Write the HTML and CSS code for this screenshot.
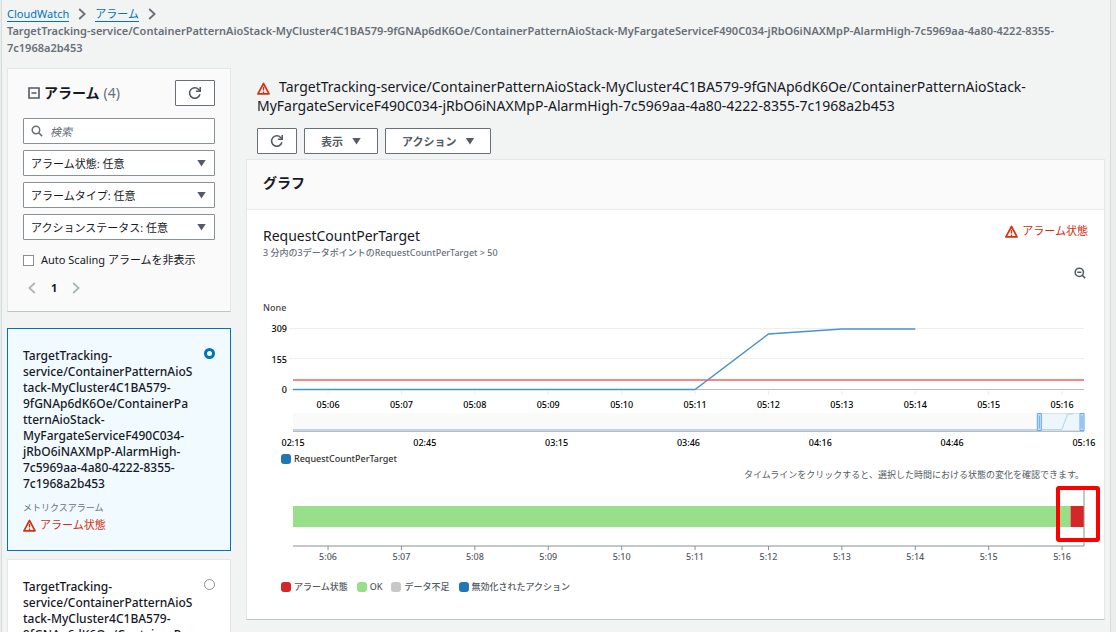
FILE: index.html
```html
<!DOCTYPE html>
<html lang="ja">
<head>
  <meta charset="UTF-8">
  <meta name="viewport" content="width=device-width, initial-scale=1.0">
  <title>CloudWatch アラーム</title>
  <link rel="stylesheet" href="styles.css">
</head>
<body>
  <!-- 共通アイコン -->
  <svg class="sprite" aria-hidden="true">
    <symbol id="icon-alarm" viewBox="0 0 14 14">
      <path d="M7 1.6 L13 12.8 H1 Z" fill="none" stroke="currentColor" stroke-width="1.8" stroke-linejoin="round"/>
      <path d="M7 5 V9.2 M7 10.2 V11.8" fill="none" stroke="currentColor" stroke-width="1.5"/>
    </symbol>
    <symbol id="icon-refresh" viewBox="0 0 16 16">
      <path d="M13.6 9.4 A6 6 0 1 1 12.2 3.9 L13.6 5.4" fill="none" stroke="currentColor" stroke-width="1.8"/>
      <path d="M14 1 V6 H9" fill="none" stroke="currentColor" stroke-width="1.8"/>
    </symbol>
    <symbol id="icon-chevron" viewBox="0 0 8 12">
      <path d="M1.2 1 L6.6 6 L1.2 11" fill="none" stroke="currentColor" stroke-width="1.8"/>
    </symbol>
  </svg>

  <div class="page">
    <nav class="breadcrumb" aria-label="パンくずリスト">
      <a href="#">CloudWatch</a><svg class="sep"><use href="#icon-chevron"/></svg><a href="#">アラーム</a><svg class="sep"><use href="#icon-chevron"/></svg>
      <span class="current">TargetTracking-service/ContainerPatternAioStack-MyCluster4C1BA579-9fGNAp6dK6Oe/ContainerPatternAioStack-MyFargateServiceF490C034-jRbO6iNAXMpP-AlarmHigh-7c5969aa-4a80-4222-8355-7c1968a2b453</span>
    </nav>

    <div class="columns">
      <!-- 左側: アラーム一覧 -->
      <aside class="sidebar">
        <section class="panel filters">
          <div class="filters-head">
            <h2>
              <svg class="collapse" viewBox="0 0 12 12"><path d="M1 1 H11 V11 H1 Z M3.5 6 H8.5" fill="none" stroke="currentColor" stroke-width="1.6"/></svg>
              アラーム <span class="count">(4)</span>
            </h2>
            <button class="btn btn-icon" type="button" aria-label="更新"><svg><use href="#icon-refresh"/></svg></button>
          </div>
          <div class="fields">
            <label class="search">
              <svg viewBox="0 0 14 14"><circle cx="5.8" cy="5.8" r="4.4" fill="none" stroke="currentColor" stroke-width="1.7"/><path d="M9 9 L13 13" stroke="currentColor" stroke-width="1.9"/></svg>
              <input type="text" placeholder="検索" aria-label="検索">
            </label>
            <div class="select"><select aria-label="アラーム状態"><option>アラーム状態: 任意</option></select></div>
            <div class="select"><select aria-label="アラームタイプ"><option>アラームタイプ: 任意</option></select></div>
            <div class="select"><select aria-label="アクションステータス"><option>アクションステータス: 任意</option></select></div>
          </div>
          <label class="check"><input type="checkbox"> Auto Scaling アラームを非表示</label>
          <div class="pager">
            <button type="button" aria-label="前へ"><svg class="prev"><use href="#icon-chevron"/></svg></button>
            <b>1</b>
            <button type="button" aria-label="次へ"><svg><use href="#icon-chevron"/></svg></button>
          </div>
        </section>

        <label class="panel card selected">
          <span class="card-top">
            <span class="card-name">TargetTracking-service/ContainerPatternAioStack-MyCluster4C1BA579-9fGNAp6dK6Oe/ContainerPa<wbr>tternAioStack-MyFargateServiceF490C034-jRbO6iNAXMpP-AlarmHigh-7c5969aa-4a80-4222-8355-7c1968a2b453</span>
            <input type="radio" name="alarm" checked>
          </span>
          <span class="card-type">メトリクスアラーム</span>
          <span class="state"><svg><use href="#icon-alarm"/></svg>アラーム状態</span>
        </label>

        <label class="panel card">
          <span class="card-top">
            <span class="card-name">TargetTracking-service/ContainerPatternAioStack-MyCluster4C1BA579-9fGNAp6dK6Oe/ContainerPa<wbr>tternAioStack-</span>
            <input type="radio" name="alarm">
          </span>
        </label>
      </aside>

      <!-- 右側: アラームの詳細 -->
      <main class="detail">
        <h1><svg><use href="#icon-alarm"/></svg>TargetTracking-service/ContainerPatternAioStack-MyCluster4C1BA579-9fGNAp6dK6Oe/ContainerPatternAioStack-MyFargateServiceF490C034-jRbO6iNAXMpP-AlarmHigh-7c5969aa-4a80-4222-8355-7c1968a2b453</h1>
        <div class="actions">
          <button class="btn btn-icon" type="button" aria-label="更新"><svg><use href="#icon-refresh"/></svg></button>
          <button class="btn btn-menu" type="button">表示</button>
          <button class="btn btn-menu" type="button">アクション</button>
        </div>

        <section class="panel graph">
          <h2 class="graph-head">グラフ</h2>
          <div class="graph-body">
            <div class="graph-title">
              <div>
                <h3>RequestCountPerTarget</h3>
                <p>3 分内の3データポイントのRequestCountPerTarget &gt; 50</p>
              </div>
              <span class="state"><svg><use href="#icon-alarm"/></svg>アラーム状態</span>
            </div>
            <button class="zoom" type="button" aria-label="ズームアウト">
              <svg viewBox="0 0 14 14"><circle cx="6.2" cy="6.2" r="4.8" fill="none" stroke="currentColor" stroke-width="1.8"/><path d="M3.8 6.2 H8.6 M9.6 9.6 L13 13" stroke="currentColor" stroke-width="1.8"/></svg>
            </button>

            <!-- メトリクスの折れ線グラフ -->
            <svg class="chart metric">
              <text class="unit" x="-30" y="11">None</text>
              <g class="y-labels">
                <text x="-6" y="32">309</text>
                <text x="-6" y="63">155</text>
                <text x="-6" y="93">0</text>
              </g>
              <g class="grid">
                <line x1="-4" x2="100%" y1="28.5" y2="28.5"/>
                <line x1="-4" x2="100%" y1="58.5" y2="58.5"/>
                <line x1="-4" x2="0" y1="89.5" y2="89.5"/>
              </g>
              <line class="axis" x1="0" x2="100%" y1="89.5" y2="89.5"/>
              <svg y="28" width="100%" height="62" viewBox="0 0 100 62" preserveAspectRatio="none" overflow="visible">
                <polyline class="series" points="0,61.5 50.83,61.5 60.11,6 69.39,1 78.67,1"/>
              </svg>
              <line class="threshold" x1="0" x2="100%" y1="80" y2="80"/>
              <g class="grid">
                <line x1="4.43%" x2="4.43%" y1="91" y2="95"/>
                <line x1="13.71%" x2="13.71%" y1="91" y2="95"/>
                <line x1="22.99%" x2="22.99%" y1="91" y2="95"/>
                <line x1="32.27%" x2="32.27%" y1="91" y2="95"/>
                <line x1="41.55%" x2="41.55%" y1="91" y2="95"/>
                <line x1="50.83%" x2="50.83%" y1="91" y2="95"/>
                <line x1="60.11%" x2="60.11%" y1="91" y2="95"/>
                <line x1="69.39%" x2="69.39%" y1="91" y2="95"/>
                <line x1="78.67%" x2="78.67%" y1="91" y2="95"/>
                <line x1="87.95%" x2="87.95%" y1="91" y2="95"/>
                <line x1="97.23%" x2="97.23%" y1="91" y2="95"/>
              </g>
              <g class="x-labels">
                <text x="4.43%" y="108">05:06</text>
                <text x="13.71%" y="108">05:07</text>
                <text x="22.99%" y="108">05:08</text>
                <text x="32.27%" y="108">05:09</text>
                <text x="41.55%" y="108">05:10</text>
                <text x="50.83%" y="108">05:11</text>
                <text x="60.11%" y="108">05:12</text>
                <text x="69.39%" y="108">05:13</text>
                <text x="78.67%" y="108">05:14</text>
                <text x="87.95%" y="108">05:15</text>
                <text x="97.23%" y="108">05:16</text>
              </g>

              <!-- 全体表示と選択範囲 -->
              <rect class="overview" y="113" width="100%" height="17"/>
              <line class="overview-series" x1="0" x2="100%" y1="130" y2="130"/>
              <line class="axis" x1="0" x2="100%" y1="131.5" y2="131.5"/>
              <rect class="brush" x="94.1%" y="113.5" width="5.9%" height="17"/>
              <svg y="113" width="100%" height="18" viewBox="0 0 100 18" preserveAspectRatio="none">
                <polyline class="series faint" points="94.1,16.5 97.2,16.5 97.9,1.5 98.7,.5"/>
              </svg>
              <svg x="94.1%" y="113" overflow="visible"><path class="handle" d="M0 .5 H4 V17.5 H0 Z M2 2.5 V15.5"/></svg>
              <svg x="100%" y="113" overflow="visible"><path class="handle" d="M-4 .5 H0 V17.5 H-4 Z M-2 2.5 V15.5"/></svg>
              <g class="x-labels">
                <text x="0" y="146">02:15</text>
                <text x="16.67%" y="146">02:45</text>
                <text x="33.33%" y="146">03:15</text>
                <text x="50%" y="146">03:46</text>
                <text x="66.67%" y="146">04:16</text>
                <text x="83.33%" y="146">04:46</text>
                <text x="100%" y="146">05:16</text>
              </g>
            </svg>
            <ul class="legend">
              <li class="blue dark">RequestCountPerTarget</li>
            </ul>

            <p class="hint">タイムラインをクリックすると、選択した時間における状態の変化を確認できます。</p>

            <!-- 状態のタイムライン -->
            <svg class="chart timeline">
              <rect class="ok" y="20" width="98.3%" height="21"/>
              <rect class="in-alarm" x="98.3%" y="20" width="1.7%" height="21"/>
              <g class="time-axis">
                <line x1="0" x2="100%" y1="60" y2="60"/>
                <line x1="100%" x2="100%" y1="0" y2="60"/>
                <line x1="4.43%" x2="4.43%" y1="60" y2="64"/>
                <line x1="13.71%" x2="13.71%" y1="60" y2="64"/>
                <line x1="22.99%" x2="22.99%" y1="60" y2="64"/>
                <line x1="32.27%" x2="32.27%" y1="60" y2="64"/>
                <line x1="41.55%" x2="41.55%" y1="60" y2="64"/>
                <line x1="50.83%" x2="50.83%" y1="60" y2="64"/>
                <line x1="60.11%" x2="60.11%" y1="60" y2="64"/>
                <line x1="69.39%" x2="69.39%" y1="60" y2="64"/>
                <line x1="78.67%" x2="78.67%" y1="60" y2="64"/>
                <line x1="87.95%" x2="87.95%" y1="60" y2="64"/>
                <line x1="97.23%" x2="97.23%" y1="60" y2="64"/>
              </g>
              <g class="x-labels muted">
                <text x="4.43%" y="74">5:06</text>
                <text x="13.71%" y="74">5:07</text>
                <text x="22.99%" y="74">5:08</text>
                <text x="32.27%" y="74">5:09</text>
                <text x="41.55%" y="74">5:10</text>
                <text x="50.83%" y="74">5:11</text>
                <text x="60.11%" y="74">5:12</text>
                <text x="69.39%" y="74">5:13</text>
                <text x="78.67%" y="74">5:14</text>
                <text x="87.95%" y="74">5:15</text>
                <text x="97.23%" y="74">5:16</text>
              </g>
              <svg x="100%" overflow="visible"><rect class="marker" x="-26" y="2" width="40" height="52" rx="1"/></svg>
            </svg>
            <ul class="legend states">
              <li class="red">アラーム状態</li>
              <li class="green">OK</li>
              <li class="gray">データ不足</li>
              <li class="blue">無効化されたアクション</li>
            </ul>
          </div>
        </section>
      </main>
    </div>
  </div>
</body>
</html>
```
FILE: styles.css
```css
* {
  margin: 0;
  padding: 0;
  box-sizing: border-box;
}
html {
  scrollbar-width: none;
}
body {
  font-family: "Noto Sans", "Noto Sans CJK JP", sans-serif;
  font-size: 11px;
  color: #16191f;
  background: #eaeded;
}
button, input, select {
  font: inherit;
  color: inherit;
}
svg {
  display: block;
}
.sprite {
  position: absolute;
  width: 0;
  height: 0;
}
.page {
  min-height: 100vh;
  margin: 0 5px 0 1px;
  padding: 5px 5px 0;
  border: solid #d5dbdb;
  border-width: 0 1px;
  background: #f2f3f3;
}

/* パンくずリスト */
.breadcrumb {
  line-height: 17px;
  color: #687078;
}
.breadcrumb a {
  color: #0073bb;
  text-decoration: none;
  border-bottom: 1px solid #0073bb;
}
.breadcrumb .sep {
  display: inline-block;
  width: 8px;
  height: 12px;
  margin: 0 9px;
  vertical-align: -2px;
}
.breadcrumb .current {
  display: block;
  font-weight: 600;
}

/* 2カラム */
.columns {
  display: flex;
  align-items: flex-start;
  gap: 15px;
  margin-top: 12px;
}
.sidebar {
  flex: 0 0 224px;
  display: flex;
  flex-direction: column;
}
.detail {
  flex: 1;
  min-width: 0;
}
.panel {
  background: #fff;
  border: 1px solid #e3e7e7;
  border-bottom-color: #bcc5c5;
}

/* ボタン */
.btn {
  height: 26px;
  background: #fff;
  border: 1px solid #687078;
  border-radius: 1px;
  color: #545b64;
  font-weight: bold;
  cursor: pointer;
}
.btn-icon {
  display: flex;
  align-items: center;
  justify-content: center;
  width: 40px;
}
.btn-icon svg {
  width: 14px;
  height: 14px;
}
.btn-menu {
  display: flex;
  align-items: center;
  gap: 9px;
  padding: 0 16px;
}
.btn-menu::after, .select::after {
  content: "";
  width: 9px;
  height: 7px;
  background: #545b64;
  clip-path: polygon(0 0, 100% 0, 50% 100%);
}

/* 絞り込み */
.filters {
  background: #fafafa;
  padding: 11px 15px 15px;
  margin-bottom: 16px;
}
.filters-head {
  display: flex;
  justify-content: space-between;
  align-items: center;
  margin-bottom: 12px;
}
.filters-head h2 {
  display: flex;
  align-items: center;
  gap: 4px;
  padding-left: 5px;
  font-size: 14px;
  line-height: 20px;
}
.collapse {
  width: 12px;
  height: 12px;
  color: #545b64;
}
.count {
  color: #687078;
  font-weight: normal;
}
.fields {
  display: flex;
  flex-direction: column;
  gap: 6px;
}
.search, .select {
  display: flex;
  align-items: center;
  height: 26px;
  background: #fff;
  border: 1px solid #879196;
  border-radius: 1px;
}
.search {
  gap: 7px;
  padding-left: 7px;
  color: #687078;
}
.search svg {
  width: 12px;
  height: 12px;
}
.search input {
  flex: 1;
  min-width: 0;
  border: 0;
  background: none;
}
.search input::placeholder {
  color: #687078;
  font-style: italic;
}
.select {
  position: relative;
}
.select select {
  width: 100%;
  height: 100%;
  padding: 0 24px 0 7px;
  border: 0;
  background: none;
  appearance: none;
}
.select::after {
  position: absolute;
  right: 8px;
  pointer-events: none;
}
.check {
  display: flex;
  align-items: center;
  gap: 7px;
  margin-top: 12px;
  line-height: 16px;
}
.check input {
  appearance: none;
  width: 11px;
  height: 11px;
  border: 1px solid #879196;
  background: #fff;
}
.pager {
  display: flex;
  align-items: center;
  gap: 15px;
  padding-left: 5px;
  margin-top: 12px;
  line-height: 16px;
}
.pager button {
  border: 0;
  background: none;
  color: #aab7b8;
}
.pager svg {
  width: 8px;
  height: 12px;
}
.pager .prev {
  transform: scaleX(-1);
}

/* アラームカード */
.card {
  display: flex;
  flex-direction: column;
  padding: 19px 15px 16px;
  margin-bottom: 8px;
}
.card.selected {
  background: #f1faff;
  border-color: #0073bb;
}
.card-top {
  display: flex;
  align-items: flex-start;
  justify-content: space-between;
}
.card-name {
  width: 173px;
  font-size: 12px;
  font-weight: 500;
  line-height: 16px;
  overflow-wrap: anywhere;
}
.card input {
  appearance: none;
  width: 11px;
  height: 11px;
  border: 1px solid #879196;
  border-radius: 50%;
  background: #fff;
}
.card input:checked {
  border: 3px solid #0073bb;
}
.card-type {
  margin-top: 8px;
  font-size: 9px;
  line-height: 16px;
  color: #687078;
}
.state {
  display: flex;
  align-items: center;
  gap: 4px;
  line-height: 18px;
  color: #d13212;
}
.state svg {
  width: 13px;
  height: 13px;
}

/* 詳細 */
.detail h1 {
  padding: 9px 11px 0;
  font-size: 14px;
  font-weight: normal;
  line-height: 19px;
}
.detail h1 svg {
  display: inline-block;
  width: 13px;
  height: 13px;
  margin-right: 9px;
  vertical-align: -3px;
  color: #d13212;
}
.actions {
  display: flex;
  gap: 7px;
  padding: 13px 11px 5px;
}
.graph-head {
  padding: 11px 16px 14px;
  font-size: 14px;
  line-height: 24px;
  background: #fafafa;
  border-bottom: 1px solid #eaeded;
}
.graph-body {
  padding: 12px 16px 23px;
}
.graph-title {
  display: flex;
  justify-content: space-between;
  align-items: flex-start;
}
.graph-title h3 {
  padding-top: 4px;
  font-size: 14px;
  font-weight: normal;
  line-height: 20px;
}
.graph-title p {
  font-size: 9px;
  font-weight: 500;
  line-height: 14px;
  color: #687078;
}
.zoom {
  display: block;
  margin: 7px 2px 0 auto;
  border: 0;
  background: none;
  color: #545b64;
}
.zoom svg {
  width: 12px;
  height: 12px;
}

/* グラフ */
.chart {
  width: calc(100% - 34px);
  margin-left: 30px;
  overflow: visible;
  font-size: 9px;
  font-weight: 500;
}
.metric {
  height: 150px;
  margin-top: 21px;
}
.timeline {
  height: 78px;
  margin-top: 4px;
}
.unit {
  fill: #444;
}
.y-labels {
  text-anchor: end;
}
.x-labels {
  text-anchor: middle;
}
.muted {
  fill: #545b64;
}
.grid line {
  stroke: #eee;
}
.axis {
  stroke: #bbb;
}
.series {
  fill: none;
  stroke: #4a94c8;
  stroke-width: 1.5px;
  vector-effect: non-scaling-stroke;
}
.series.faint {
  stroke: #b5d3e9;
  stroke-width: 1px;
}
.threshold {
  stroke: #ee6060;
  stroke-width: 1.5px;
}
.overview {
  fill: #fafafa;
}
.overview-series {
  stroke: #c0d5e5;
  stroke-width: 2px;
}
.brush {
  fill: #edf5fd;
  stroke: #cfe3f7;
}
.handle {
  fill: #c5dffa;
  stroke: #6aaae8;
}
.ok {
  fill: #98df8a;
}
.in-alarm {
  fill: #d62728;
}
.time-axis line {
  stroke: #879196;
}
.marker {
  fill: none;
  stroke: #f00;
  stroke-width: 4px;
  stroke-linejoin: round;
}
.legend {
  display: flex;
  gap: 9px;
  padding-left: 18px;
  font-size: 9px;
  font-weight: 500;
  line-height: 18px;
  list-style: none;
  color: #545b64;
}
.legend li {
  display: flex;
  align-items: center;
  gap: 3px;
}
.legend li::before {
  content: "";
  width: 10px;
  height: 10px;
  border-radius: 3px;
  background: #1f77b4;
}
.legend .dark {
  color: #333;
}
.legend .red::before {
  background: #d62728;
}
.legend .green::before {
  background: #98df8a;
}
.legend .gray::before {
  background: #c7c7c7;
}
.states {
  margin-top: 14px;
}
.hint {
  margin-right: 4px;
  font-size: 9px;
  line-height: 14px;
  text-align: right;
  color: #545b64;
}
```
